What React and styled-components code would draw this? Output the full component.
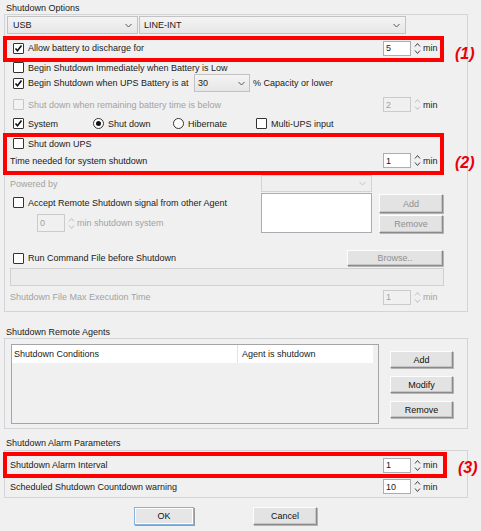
import React from "react";
import styled, { createGlobalStyle } from "styled-components";

const GlobalStyle = createGlobalStyle`
  html, body {
    margin: 0;
    padding: 0;
    background: #f0f0f0;
  }
  body {
    font-family: "Liberation Sans", Arial, sans-serif;
    font-size: 9px;
    color: #1a1a1a;
  }
`;

const Dialog = styled.div`
  width: 481px;
  height: 531px;
  box-sizing: border-box;
  padding-left: 4px;
  background: #f0f0f0;
  overflow: hidden;
`;

const GroupTitle = styled.div`
  height: ${(p) => p.$h}px;
  box-sizing: border-box;
  display: flex;
  align-items: flex-end;
  padding: 0 0 ${(p) => p.$pb}px 2px;
  line-height: 10px;
`;

const Group = styled.div`
  width: 464px;
  box-sizing: border-box;
  border: 1px solid #d2d4d8;
  padding-bottom: ${(p) => p.$pb || 0}px;
`;

const Row = styled.div`
  display: flex;
  align-items: center;
  height: ${(p) => p.$h}px;
  padding-left: ${(p) => p.$pl ?? 8}px;
  padding-right: ${(p) => p.$pr ?? 28}px;
  margin-top: ${(p) => p.$mt || 0}px;
  color: ${(p) => (p.$disabled ? "#a2a2a2" : "inherit")};
  white-space: nowrap;
`;

const HighlightRow = styled.div`
  display: flex;
  align-items: flex-start;
  margin-top: ${(p) => p.$mt || 0}px;
`;

const RedBox = styled.div`
  width: ${(p) => p.$w}px;
  height: ${(p) => p.$h}px;
  box-sizing: border-box;
  border: 4px solid #ff0000;
  margin-left: -2px;
  flex: none;
`;

const Mark = styled.span`
  flex: none;
  color: #e8000b;
  font: italic bold 16px/16px "Liberation Sans", Arial, sans-serif;
  margin-left: ${(p) => p.$ml}px;
  margin-top: ${(p) => p.$mt}px;
`;

const CheckLabel = styled.label`
  display: inline-flex;
  align-items: center;
  gap: 4px;
  flex: none;
  width: ${(p) => (p.$w ? `${p.$w}px` : "auto")};
  color: ${(p) => (p.$disabled ? "#a2a2a2" : "inherit")};
`;

const Box = styled.span`
  width: 11px;
  height: 11px;
  box-sizing: border-box;
  flex: none;
  display: inline-flex;
  align-items: center;
  justify-content: center;
  border: 1px solid ${(p) => (p.$disabled ? "#c6c6c6" : "#333")};
  border-radius: ${(p) => (p.$round ? "50%" : "1px")};
  background: ${(p) => (p.$disabled ? "#f3f3f3" : "#fff")};
`;

const Dot = styled.span`
  width: 5px;
  height: 5px;
  border-radius: 50%;
  background: #111;
`;

const Check = ({ checked, disabled, w, children }) => (
  <CheckLabel $w={w} $disabled={disabled}>
    <Box $disabled={disabled}>
      {checked && (
        <svg width="9" height="9" viewBox="0 0 9 9">
          <polyline
            points="1.5,4.5 3.5,6.8 7.5,1.5"
            fill="none"
            stroke="#111"
            strokeWidth="1.6"
          />
        </svg>
      )}
    </Box>
    {children}
  </CheckLabel>
);

const Radio = ({ checked, w, children }) => (
  <CheckLabel $w={w}>
    <Box $round>{checked && <Dot />}</Box>
    {children}
  </CheckLabel>
);

const SpinBox = styled.div`
  display: flex;
  align-items: center;
  flex: none;
  width: ${(p) => (p.$w ? `${p.$w}px` : "56px")};
  margin-left: ${(p) => (p.$inline ? "0" : "auto")};
`;

const SpinInput = styled.div`
  width: 28px;
  height: ${(p) => p.$h || 15}px;
  box-sizing: border-box;
  flex: none;
  display: flex;
  align-items: center;
  padding-left: 2px;
  border: 1px solid ${(p) => (p.$disabled ? "#cbcbcb" : "#abadb3")};
  background: ${(p) => (p.$disabled ? "#f0f0f0" : "#fff")};
  color: ${(p) => (p.$disabled ? "#a2a2a2" : "#1a1a1a")};
`;

const Unit = styled.span`
  margin-left: 2px;
  color: ${(p) => (p.$disabled ? "#a2a2a2" : "#1a1a1a")};
`;

const Arrows = ({ disabled }) => (
  <svg width="7" height="15" viewBox="0 0 7 15" style={{ marginLeft: 3, flex: "none" }}>
    <g fill="none" stroke={disabled ? "#c0c0c0" : "#444"} strokeWidth="1">
      <polyline points="1,5.5 3.5,2.5 6,5.5" />
      <polyline points="1,9.5 3.5,12.5 6,9.5" />
    </g>
  </svg>
);

const Spinner = ({ value, disabled, unitDisabled, unit = "min", h, inline, w }) => (
  <SpinBox $inline={inline} $w={w}>
    <SpinInput $disabled={disabled} $h={h}>
      {value}
    </SpinInput>
    <Arrows disabled={disabled} />
    <Unit $disabled={unitDisabled}>{unit}</Unit>
  </SpinBox>
);

const SelectBox = styled.div`
  width: ${(p) => p.$w}px;
  height: ${(p) => p.$h || 18}px;
  box-sizing: border-box;
  flex: none;
  display: flex;
  align-items: center;
  justify-content: space-between;
  padding: 0 ${(p) => p.$pr || 5}px 0 ${(p) => p.$pl || 4}px;
  border: 1px solid ${(p) => (p.$disabled ? "#d3d3d3" : "#c2c2c2")};
  background: ${(p) =>
    p.$disabled ? "#efefef" : "linear-gradient(#f4f4f4, #e6e6e6)"};
  margin-left: ${(p) => p.$ml || 0}px;
`;

const Select = ({ value, w, h, pl, pr, ml, disabled }) => (
  <SelectBox $w={w} $h={h} $pl={pl} $pr={pr} $ml={ml} $disabled={disabled}>
    <span>{value}</span>
    <svg width="7" height="5" viewBox="0 0 7 5">
      <polyline
        points="0.5,1 3.5,4 6.5,1"
        fill="none"
        stroke={disabled ? "#c4c4c4" : "#555"}
        strokeWidth="1"
      />
    </svg>
  </SelectBox>
);

const Button = styled.div`
  width: ${(p) => p.$w}px;
  height: ${(p) => p.$h}px;
  box-sizing: border-box;
  flex: none;
  display: flex;
  align-items: center;
  justify-content: center;
  border: 1px solid;
  border-color: ${(p) =>
    p.$primary ? "#86b3e0" : "#fdfdfd #8a8a8a #8a8a8a #fdfdfd"};
  box-shadow: ${(p) =>
    p.$primary
      ? "inset 0 0 0 1px #fff, 1px 1px 0 #9c9c9c"
      : "inset -1px -1px 0 #c6c6c6, 1px 1px 0 #b4b4b4"};
  background: ${(p) => (p.$primary ? "#e6e6e6" : "#e3e3e3")};
  color: ${(p) => (p.$disabled ? "#8f8f8f" : "#111")};
  margin-left: ${(p) => (p.$auto ? "auto" : "0")};
`;

const Split = styled.div`
  display: flex;
  height: 58px;
`;

const LeftCol = styled.div`
  width: 256px;
  flex: none;
`;

const MidCol = styled.div`
  width: 111px;
  flex: none;
  display: flex;
  flex-direction: column;
  gap: 1px;
`;

const ListBox = styled.div`
  height: 40px;
  box-sizing: border-box;
  border: 1px solid #abadb3;
  background: #fff;
`;

const ButtonCol = styled.div`
  display: flex;
  flex-direction: column;
  gap: ${(p) => p.$gap}px;
  margin-left: ${(p) => p.$ml}px;
  padding-top: ${(p) => p.$pt}px;
`;

const TextField = styled.div`
  width: 434px;
  height: 18px;
  box-sizing: border-box;
  margin: 1px 0 0 5px;
  border: 1px solid #d0d0d0;
  background: #ececec;
`;

const AgentsBody = styled.div`
  display: flex;
  padding: 5px 0 4px 6px;
`;

const Table = styled.div`
  width: 368px;
  height: 80px;
  box-sizing: border-box;
  border: 1px solid #a5a5a5;
  background: #f0f0f0;
`;

const HeadRow = styled.div`
  display: flex;
  width: 361px;
  height: 18px;
  background: #fff;
`;

const HeadCell = styled.div`
  display: flex;
  align-items: center;
  width: ${(p) => (p.$w ? `${p.$w}px` : "auto")};
  flex: ${(p) => (p.$w ? "none" : "1")};
  padding-left: ${(p) => p.$pl}px;
  border-right: ${(p) => (p.$divider ? "1px solid #e3e3e3" : "none")};
`;

const Footer = styled.div`
  display: flex;
  gap: 59px;
  padding: 9px 0 0 130px;
`;

export default function App() {
  return (
    <>
      <GlobalStyle />
      <Dialog>
        <GroupTitle $h={14} $pb={1}>Shutdown Options</GroupTitle>
        <Group $pb={3}>
          <Row $h={20} $pl={2}>
            <Select value="USB" w={131} pl={5} />
            <Select value="LINE-INT" w={267} ml={1} />
          </Row>

          <HighlightRow $mt={1}>
            <RedBox $w={441} $h={26}>
              <Row $h={16} $pl={6} $pr={1}>
                <Check checked>Allow battery to discharge for</Check>
                <Spinner value="5" />
              </Row>
            </RedBox>
            <Mark $ml={11} $mt={10}>(1)</Mark>
          </HighlightRow>

          <Row $h={11}>
            <Check>Begin Shutdown Immediately when Battery is Low</Check>
          </Row>
          <Row $h={20}>
            <Check checked w={181}>Begin Shutdown when UPS Battery is at</Check>
            <Select value="30" w={56} pl={3} pr={4} />
            <span style={{ marginLeft: 3 }}>% Capacity or lower</span>
          </Row>
          <Row $h={23}>
            <Check disabled>Shut down when remaining battery time is below</Check>
            <Spinner value="2" disabled />
          </Row>
          <Row $h={15}>
            <Check checked w={80}>System</Check>
            <Radio checked w={80}>Shut down</Radio>
            <Radio w={83}>Hibernate</Radio>
            <Check>Multi-UPS input</Check>
          </Row>

          <HighlightRow $mt={2}>
            <RedBox $w={441} $h={42}>
              <Row $h={13} $pl={6} $pr={1}>
                <Check>Shut down UPS</Check>
              </Row>
              <Row $h={21} $pl={3} $pr={1}>
                <span>Time needed for system shutdown</span>
                <Spinner value="1" />
              </Row>
            </RedBox>
            <Mark $ml={11} $mt={22}>(2)</Mark>
          </HighlightRow>

          <Split>
            <LeftCol>
              <Row $h={17} $pl={5} $pr={0} $disabled>
                Powered by
              </Row>
              <Row $h={21} $pr={0}>
                <Check>Accept Remote Shutdown signal from other Agent</Check>
              </Row>
              <Row $h={20} $pl={32} $pr={0}>
                <Spinner
                  value="0"
                  disabled
                  unitDisabled
                  inline
                  w={120}
                  h={18}
                  unit="min shutdown system"
                />
              </Row>
            </LeftCol>
            <MidCol>
              <Select w={111} h={17} disabled />
              <ListBox />
            </MidCol>
            <ButtonCol $ml={7} $pt={19} $gap={2}>
              <Button $w={64} $h={19} $disabled>
                Add
              </Button>
              <Button $w={64} $h={18} $disabled>
                Remove
              </Button>
            </ButtonCol>
          </Split>

          <Row $h={18} $mt={16} $pr={24}>
            <Check>Run Command File before Shutdown</Check>
            <Button $w={96} $h={16} $auto $disabled>
              Browse..
            </Button>
          </Row>
          <TextField />
          <Row $h={22} $pl={5} $disabled>
            Shutdown File Max Execution Time
            <Spinner value="1" disabled unitDisabled />
          </Row>
        </Group>

        <GroupTitle $h={26} $pb={1}>Shutdown Remote Agents</GroupTitle>
        <Group>
          <AgentsBody>
            <Table>
              <HeadRow>
                <HeadCell $w={223} $pl={2} $divider>
                  Shutdown Conditions
                </HeadCell>
                <HeadCell $pl={4}>Agent is shutdown</HeadCell>
              </HeadRow>
            </Table>
            <ButtonCol $ml={11} $pt={7} $gap={8}>
              <Button $w={63} $h={17}>Add</Button>
              <Button $w={63} $h={17}>Modify</Button>
              <Button $w={63} $h={17}>Remove</Button>
            </ButtonCol>
          </AgentsBody>
        </Group>

        <GroupTitle $h={21} $pb={2}>Shutdown Alarm Parameters</GroupTitle>
        <Group $pb={2}>
          <HighlightRow $mt={1}>
            <RedBox $w={444} $h={26}>
              <Row $h={18} $pl={3} $pr={4}>
                <span>Shutdown Alarm Interval</span>
                <Spinner value="1" />
              </Row>
            </RedBox>
            <Mark $ml={11} $mt={8}>(3)</Mark>
          </HighlightRow>
          <Row $h={17} $pl={5}>
            <span>Scheduled Shutdown Countdown warning</span>
            <Spinner value="10" />
          </Row>
        </Group>

        <Footer>
          <Button $w={60} $h={18} $primary>
            OK
          </Button>
          <Button $w={64} $h={18}>
            Cancel
          </Button>
        </Footer>
      </Dialog>
    </>
  );
}
